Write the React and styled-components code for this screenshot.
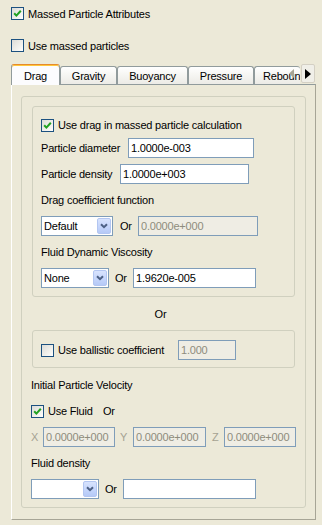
import React from "react";
import styled, { createGlobalStyle } from "styled-components";

const GlobalStyle = createGlobalStyle`
  html, body {
    margin: 0;
    padding: 0;
    background: #ece9d8;
  }
  body {
    font-family: "Liberation Sans", Arial, sans-serif;
    font-size: 11px;
    letter-spacing: -0.2px;
    color: #000;
  }
`;

const Page = styled.div`
  width: 322px;
  height: 525px;
  box-sizing: border-box;
  padding: 7px 6px 0 11px;
  display: flex;
  flex-direction: column;
  overflow: hidden;
`;

const CheckRow = styled.label`
  display: flex;
  align-items: center;
  gap: 4px;
  flex: none;
  height: ${p => p.$h || 20}px;
  width: ${p => (p.$w ? `${p.$w}px` : "auto")};
  margin-top: ${p => p.$mt || 0}px;
  white-space: nowrap;
`;

const CheckBox = styled.span`
  width: 13px;
  height: 13px;
  box-sizing: border-box;
  flex: none;
  border: 1px solid #1c5180;
  background: linear-gradient(135deg, #dcdcd7 0%, #f4f4f0 70%, #ffffff 100%);
  display: flex;
  align-items: center;
  justify-content: center;
`;

const Check = ({ checked }) => (
  <CheckBox>
    {checked && (
      <svg width="11" height="11" viewBox="0 0 11 11">
        <path d="M2.2 5.2 L4.4 7.6 L8.8 2.8" fill="none" stroke="#21a121" strokeWidth="2" />
      </svg>
    )}
  </CheckBox>
);

const TabStrip = styled.div`
  position: relative;
  display: flex;
  align-items: flex-end;
  height: 20px;
  width: 305px;
  margin-top: 12px;
`;

const Tab = styled.div`
  position: relative;
  z-index: ${p => (p.$active ? 2 : 1)};
  flex: none;
  box-sizing: border-box;
  width: ${p => p.$w}px;
  height: ${p => (p.$active ? 21 : 18)}px;
  margin-bottom: ${p => (p.$active ? -1 : 0)}px;
  margin-left: ${p => p.$ml || 0}px;
  border: 1px solid #919b9c;
  border-bottom: none;
  border-right: ${p => (p.$cut ? "none" : "1px solid #919b9c")};
  border-top-color: ${p => (p.$active ? "#e68b2c" : "#919b9c")};
  border-radius: 3px 3px 0 0;
  box-shadow: ${p => (p.$active ? "inset 0 1px 0 #ffc73c" : "none")};
  background: ${p =>
    p.$active ? "#fcfcfe" : "linear-gradient(#ffffff 0%, #f7f7f4 40%, #ecebe6 100%)"};
  display: flex;
  align-items: center;
  justify-content: ${p => (p.$cut ? "flex-start" : "center")};
  padding-left: ${p => (p.$cut ? 8 : 0)}px;
  padding-top: ${p => (p.$active ? 1 : 0)}px;
  overflow: hidden;
  white-space: nowrap;
`;

const ScrollLeft = styled.svg`
  position: absolute;
  left: 278px;
  top: 5px;
  z-index: 3;
`;

const ScrollButton = styled.div`
  flex: none;
  box-sizing: border-box;
  width: 14px;
  height: 19px;
  margin-left: 1px;
  margin-bottom: 1px;
  border: 1px solid #d4d0c4;
  border-radius: 2px;
  background: #f0efe8;
  display: flex;
  align-items: center;
  justify-content: center;
`;

const Panel = styled.div`
  box-sizing: border-box;
  width: 305px;
  height: 436px;
  border-left: 1px solid #ffffff;
  border-top: 1px solid #919b9c;
  border-right: 1px solid #a7a596;
  border-bottom: 1px solid #a7a596;
  padding: 11px 9px;
`;

const Group = styled.div`
  box-sizing: border-box;
  border: 1px solid #d0d0bf;
  border-radius: 3px;
  display: flex;
  flex-direction: column;
  gap: 6px;
  flex: none;
  margin-left: ${p => p.$ml || 0}px;
  margin-top: ${p => p.$mt || 0}px;
  padding: ${p => p.$pad};
`;

const Row = styled.div`
  display: flex;
  align-items: center;
  height: 20px;
  flex: none;
  margin-top: ${p => p.$mt || 0}px;
  justify-content: ${p => (p.$center ? "center" : "flex-start")};
  padding-right: ${p => (p.$center ? 5 : 0)}px;
  white-space: nowrap;
`;

const Label = styled.span`
  flex: none;
  width: ${p => (p.$w ? `${p.$w}px` : "auto")};
  margin-left: ${p => p.$ml || 0}px;
  color: ${p => (p.$off ? "#a5a292" : "#000")};
`;

const Field = styled.input`
  box-sizing: border-box;
  flex: none;
  width: ${p => p.$w}px;
  height: 20px;
  margin: 0;
  padding: 0 2px;
  border: 1px solid #7f9db9;
  border-radius: 0;
  outline: none;
  font: inherit;
  letter-spacing: inherit;
  background: ${p => (p.$off ? "#efede4" : "#ffffff")};
  color: ${p => (p.$off ? "#8e8c7d" : "#000000")};
`;

const ComboBox = styled.div`
  box-sizing: border-box;
  flex: none;
  width: ${p => p.$w}px;
  height: 20px;
  border: 1px solid #7f9db9;
  background: #ffffff;
  display: flex;
  align-items: center;
  padding-left: 2px;
`;

const ComboButton = styled.span`
  margin-left: auto;
  margin-right: 1px;
  box-sizing: border-box;
  width: 14px;
  height: 16px;
  border: 1px solid #b3c6f1;
  border-radius: 2px;
  background: linear-gradient(#d8e3fd 0%, #c3d4fb 60%, #b5c9f6 100%);
  display: flex;
  align-items: center;
  justify-content: center;
`;

const Combo = ({ w, value }) => (
  <ComboBox $w={w}>
    <span>{value}</span>
    <ComboButton>
      <svg width="8" height="6" viewBox="0 0 8 6">
        <path d="M1 1.2 L4 4.2 L7 1.2" fill="none" stroke="#4d6185" strokeWidth="2" />
      </svg>
    </ComboButton>
  </ComboBox>
);

const Or = styled.span`
  flex: none;
  width: 18px;
  margin-left: ${p => p.$ml || 7}px;
`;

export default function App() {
  return (
    <Page>
      <GlobalStyle />
      <CheckRow $h={13}>
        <Check checked />
        <span>Massed Particle Attributes</span>
      </CheckRow>
      <CheckRow $h={13} $mt={19}>
        <Check />
        <span>Use massed particles</span>
      </CheckRow>

      <TabStrip>
        <Tab $active $w={49}>Drag</Tab>
        <Tab $w={57}>Gravity</Tab>
        <Tab $w={71}>Buoyancy</Tab>
        <Tab $w={66}>Pressure</Tab>
        <Tab $w={46} $cut>Rebound</Tab>
        <ScrollLeft width="5" height="9" viewBox="0 0 5 9">
          <path d="M5 0 L0 4.5 L5 9 Z" fill="#a6a494" />
        </ScrollLeft>
        <ScrollButton>
          <svg width="6" height="10" viewBox="0 0 6 10">
            <path d="M0 0 L6 5 L0 10 Z" fill="#000" />
          </svg>
        </ScrollButton>
      </TabStrip>

      <Panel>
        <Group $pad="9px 10px 7px 9px" style={{ width: 285, height: 412 }}>
          <Group $ml={1} $pad="11px 8px 8px 8px" style={{ gap: 6 }}>
            <CheckRow $h={14}>
              <Check checked />
              <span>Use drag in massed particle calculation</span>
            </CheckRow>
            <Row>
              <Label $w={87}>Particle diameter</Label>
              <Field $w={126} defaultValue="1.0000e-003" readOnly />
            </Row>
            <Row>
              <Label $w={79}>Particle density</Label>
              <Field $w={129} defaultValue="1.0000e+003" readOnly />
            </Row>
            <Row>
              <Label>Drag coefficient function</Label>
            </Row>
            <Row>
              <Combo w={72} value="Default" />
              <Or>Or</Or>
              <Field $w={120} $off defaultValue="0.0000e+000" readOnly />
            </Row>
            <Row>
              <Label>Fluid Dynamic Viscosity</Label>
            </Row>
            <Row>
              <Combo w={68} value="None" />
              <Or $ml={6}>Or</Or>
              <Field $w={123} defaultValue="1.9620e-005" readOnly />
            </Row>
          </Group>

          <Row $center $mt={1}>Or</Row>

          <Group $ml={1} $pad="9px 8px 7px 8px">
            <Row>
              <CheckRow $w={137}>
                <Check />
                <span>Use ballistic coefficient</span>
              </CheckRow>
              <Field $w={58} $off defaultValue="1.000" readOnly />
            </Row>
          </Group>

          <Row $mt={1}>
            <Label>Initial Particle Velocity</Label>
          </Row>
          <Row>
            <CheckRow $w={72}>
              <Check checked />
              <span>Use Fluid</span>
            </CheckRow>
            <Label>Or</Label>
          </Row>
          <Row>
            <Label $off $w={12}>X</Label>
            <Field $w={72} $off defaultValue="0.0000e+000" readOnly />
            <Label $off $w={13} $ml={5}>Y</Label>
            <Field $w={73} $off defaultValue="0.0000e+000" readOnly />
            <Label $off $w={12} $ml={6}>Z</Label>
            <Field $w={72} $off defaultValue="0.0000e+000" readOnly />
          </Row>
          <Row>
            <Label>Fluid density</Label>
          </Row>
          <Row>
            <Combo w={68} value="" />
            <Or $ml={6}>Or</Or>
            <Field $w={133} defaultValue="" readOnly />
          </Row>
        </Group>
      </Panel>
    </Page>
  );
}
